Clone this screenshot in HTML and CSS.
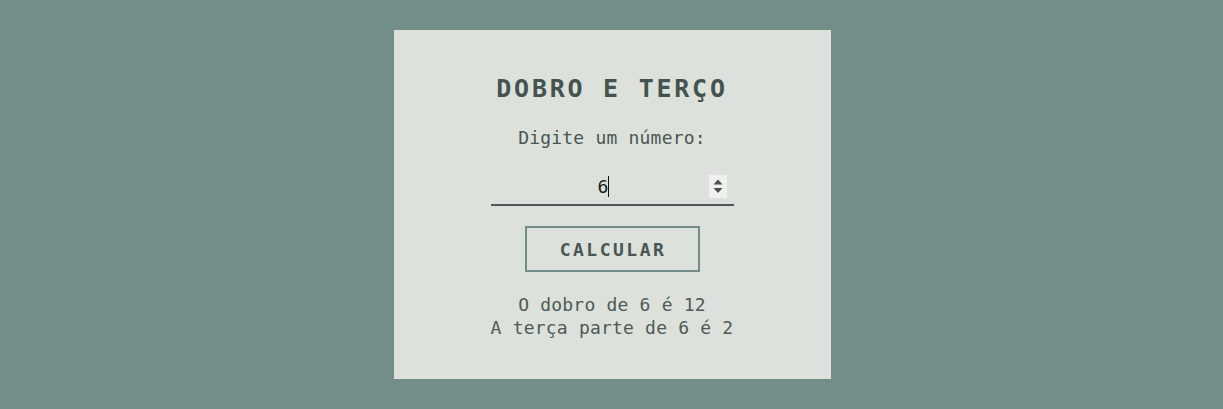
FILE: index.html
```html
<!DOCTYPE html>
<html lang="pt-BR">
<head>
<meta charset="utf-8">
<title>Dobro e Terço</title>
<link rel="stylesheet" href="styles.css">
</head>
<body>
<main class="card">
  <h1 class="title">DOBRO E TERÇO</h1>
  <label class="label" for="numero">Digite um número:</label>
  <div class="field-wrap">
    <input class="field" id="numero" type="number" value="6" autofocus>
    <span class="caret"></span>
    <span class="spin" aria-hidden="true">
      <svg width="18" height="23" viewBox="0 0 18 23">
        <polygon points="4.5,9.5 13.5,9.5 9,4.5" fill="#4f4f4f"/>
        <polygon points="4.5,13 13.5,13 9,18" fill="#4f4f4f"/>
      </svg>
    </span>
  </div>
  <button class="btn" type="button">CALCULAR</button>
  <div class="result">
    <p>O dobro de 6 é 12</p>
    <p>A terça parte de 6 é 2</p>
  </div>
</main>
</body>
</html>
```
FILE: styles.css
```css
html, body {
  margin: 0;
  padding: 0;
}
body {
  background: #738d88;
  display: flex;
  justify-content: center;
  padding: 30px 0 0 1px;
  font-family: "DejaVu Sans Mono", "Liberation Mono", monospace;
  color: #4a5651;
}
.card {
  box-sizing: border-box;
  width: 437px;
  height: 349px;
  background: #dce1dc;
  padding: 44px 0 40px;
  display: flex;
  flex-direction: column;
  align-items: center;
}
.title {
  margin: 0;
  font-size: 25px;
  line-height: 30px;
  font-weight: bold;
  letter-spacing: 2.75px;
  color: #45534e;
  text-align: center;
}
.label {
  margin-top: 22px;
  font-size: 18px;
  line-height: 24px;
  letter-spacing: 0.2px;
  color: #4a5651;
}
.field-wrap {
  position: relative;
  margin-top: 19px;
  width: 243px;
  height: 37px;
}
.field {
  box-sizing: border-box;
  width: 243px;
  height: 37px;
  padding: 0 25px 0 7px;
  border: none;
  border-bottom: 2px solid #4b5a53;
  background: transparent;
  font-family: "DejaVu Sans Mono", "Liberation Mono", monospace;
  font-size: 18px;
  color: #1b1b1b;
  text-align: center;
  outline: none;
  caret-color: transparent;
  -moz-appearance: textfield;
}
.field::-webkit-inner-spin-button,
.field::-webkit-outer-spin-button {
  -webkit-appearance: none;
  margin: 0;
}
.caret {
  position: absolute;
  left: 117px;
  top: 7px;
  width: 1px;
  height: 21px;
  background: #111;
}
.spin {
  position: absolute;
  right: 7px;
  top: 6px;
  width: 18px;
  height: 23px;
  background: #f0f0f0;
  display: block;
}
.spin svg {
  display: block;
}
.btn {
  margin-top: 20px;
  box-sizing: border-box;
  width: 175px;
  height: 46px;
  border: 2px solid #728c87;
  background: transparent;
  font-family: "DejaVu Sans Mono", "Liberation Mono", monospace;
  font-size: 18px;
  font-weight: bold;
  letter-spacing: 2.5px;
  color: #4a5651;
  padding: 0 0 0 2px;
}
.result {
  margin-top: 21px;
  text-align: center;
  font-size: 18px;
  line-height: 23px;
  letter-spacing: 0.2px;
  color: #4f5a55;
}
.result p {
  margin: 0;
}
```
